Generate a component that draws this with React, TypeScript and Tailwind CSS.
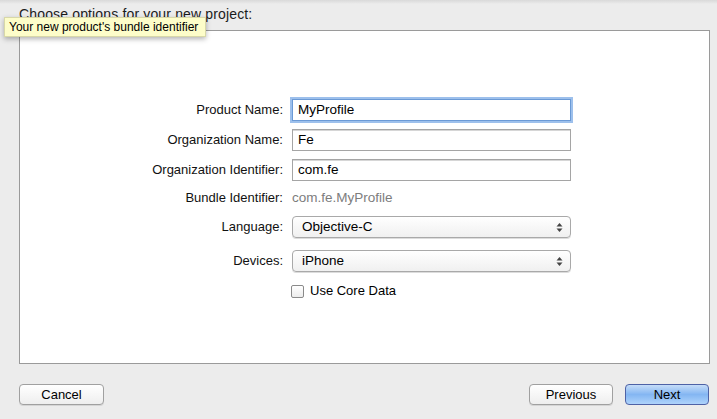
import React from "react";

const font = { fontFamily: '"Liberation Sans", Arial, sans-serif' };

function Field({ label, children }: { label: string; children: React.ReactNode }) {
  return (
    <div className="flex items-center h-[22px]">
      <div className="w-[264px] pr-[1px] text-right text-[13px] text-[#111]">{label}</div>
      <div className="ml-[8px] w-[279px] h-full flex items-center">{children}</div>
    </div>
  );
}

function TextBox({ value, focused }: { value: string; focused?: boolean }) {
  return (
    <div
      className={
        "w-full h-[22px] flex items-center pl-[5px] bg-white text-[13.5px] text-black border " +
        (focused
          ? "border-[#6b9ad6] shadow-[0_0_0_2px_#9dc0ec]"
          : "border-[#a5a5a5] shadow-[inset_0_1px_0_#d6d6d6]")
      }
    >
      {value}
    </div>
  );
}

function Select({ value }: { value: string }) {
  return (
    <div className="w-full h-[22px] flex items-center justify-between pl-[9px] pr-[7px] rounded-[4px] border border-[#a9a9a9] bg-gradient-to-b from-white to-[#f0f0f0] shadow-[0_1px_0_#dcdcdc] text-[13.5px] text-black">
      <span>{value}</span>
      <svg width="7" height="11" viewBox="0 0 7 11">
        <path d="M3.5 1 L6.5 4.5 L0.5 4.5 Z" fill="#444" />
        <path d="M3.5 10 L6.5 6.5 L0.5 6.5 Z" fill="#444" />
      </svg>
    </div>
  );
}

function Button({ label, primary, width }: { label: string; primary?: boolean; width: string }) {
  return (
    <div
      className={
        "h-[21px] flex items-center justify-center rounded-[4px] text-[13px] text-black border " +
        width +
        " " +
        (primary
          ? "border-[#4e62a6] bg-gradient-to-b from-[#c6ddf8] via-[#84b6f2] to-[#aed3fb]"
          : "border-[#a0a0a0] bg-gradient-to-b from-white to-[#eeeeee] shadow-[0_1px_0_#d5d5d5]")
      }
    >
      {label}
    </div>
  );
}

export default function App() {
  return (
    <div className="relative w-[717px] h-[419px] overflow-hidden bg-[#ececec]" style={font}>
      <div className="h-[4px] bg-gradient-to-b from-[#d9d9d9] to-[#ececec]" />
      <div className="pl-[19px] mt-[2px] text-[14px] leading-[16px] tracking-[0.15px] text-[#1b1b1b]">
        Choose options for your new project:
      </div>

      <div className="ml-[19px] mt-[8px] w-[691px] h-[334px] bg-white border border-[#9a9a9a]">
        <div className="pt-[68px] flex flex-col">
          <Field label="Product Name:">
            <TextBox value="MyProfile" focused />
          </Field>
          <div className="mt-[8px]">
            <Field label="Organization Name:">
              <TextBox value="Fe" />
            </Field>
          </div>
          <div className="mt-[8px]">
            <Field label="Organization Identifier:">
              <TextBox value="com.fe" />
            </Field>
          </div>
          <div className="mt-[6px]">
            <Field label="Bundle Identifier:">
              <span className="text-[13.5px] text-[#7d7d7d]">com.fe.MyProfile</span>
            </Field>
          </div>
          <div className="mt-[7px]">
            <Field label="Language:">
              <Select value="Objective-C" />
            </Field>
          </div>
          <div className="mt-[12px]">
            <Field label="Devices:">
              <Select value="iPhone" />
            </Field>
          </div>
          <div className="mt-[8px] flex items-center h-[22px] pl-[271px]">
            <div className="w-[13px] h-[13px] rounded-[2px] border border-[#8a8a8a] bg-gradient-to-b from-white to-[#ececec]" />
            <span className="ml-[6px] text-[13px] text-black">Use Core Data</span>
          </div>
        </div>
      </div>

      <div className="mt-[20px] pl-[19px] pr-[8px] flex items-center">
        <Button label="Cancel" width="w-[85px]" />
        <div className="flex-1" />
        <Button label="Previous" width="w-[84px]" />
        <div className="w-[12px]" />
        <Button label="Next" primary width="w-[84px]" />
      </div>

      <div className="absolute left-[4px] top-[17px] w-[202px] h-[20px] flex items-center pl-[4px] bg-[#fdfdc9] border border-[#d8d8a8] shadow-[0_2px_5px_rgba(0,0,0,0.3)] text-[12px] text-black">
        Your new product's bundle identifier
      </div>
    </div>
  );
}
